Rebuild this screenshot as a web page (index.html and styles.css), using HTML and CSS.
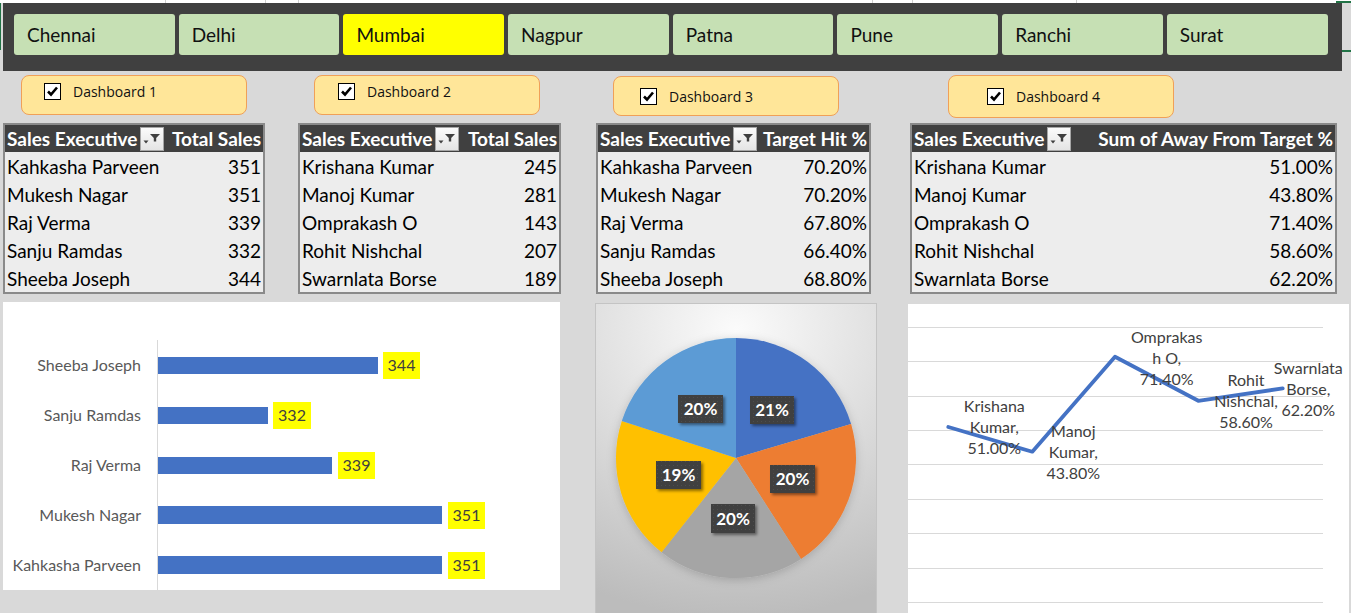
FILE: index.html
```html
<!DOCTYPE html>
<html>
<head>
<meta charset="utf-8">
<title>Sales Dashboard</title>
<link rel="stylesheet" href="styles.css">
</head>
<body>
<div class="sel-mark sel-left"></div>
<div class="sel-mark sel-top"></div>
<div class="sel-mark sel-mid"></div>
<div class="topstrip"></div>

<div class="band">
  <div class="slicer">Chennai</div>
  <div class="slicer">Delhi</div>
  <div class="slicer active">Mumbai</div>
  <div class="slicer">Nagpur</div>
  <div class="slicer">Patna</div>
  <div class="slicer">Pune</div>
  <div class="slicer">Ranchi</div>
  <div class="slicer">Surat</div>
</div>

<div class="pills">
  <div class="pill pill-1"><span class="cb"><svg width="15" height="15" viewBox="0 0 15 15"><path d="M3 7.5 L6 10.5 L12 3.5" fill="none" stroke="#000" stroke-width="2.6"/></svg></span><span class="pill-label">Dashboard 1</span></div>
  <div class="pill pill-2"><span class="cb"><svg width="15" height="15" viewBox="0 0 15 15"><path d="M3 7.5 L6 10.5 L12 3.5" fill="none" stroke="#000" stroke-width="2.6"/></svg></span><span class="pill-label">Dashboard 2</span></div>
  <div class="pill pill-3"><span class="cb"><svg width="15" height="15" viewBox="0 0 15 15"><path d="M3 7.5 L6 10.5 L12 3.5" fill="none" stroke="#000" stroke-width="2.6"/></svg></span><span class="pill-label">Dashboard 3</span></div>
  <div class="pill pill-4"><span class="cb"><svg width="15" height="15" viewBox="0 0 15 15"><path d="M3 7.5 L6 10.5 L12 3.5" fill="none" stroke="#000" stroke-width="2.6"/></svg></span><span class="pill-label">Dashboard 4</span></div>
</div>

<div class="tables">
  <div class="pivot pivot-1">
    <div class="row head"><div class="c1"><span>Sales Executive</span><span class="filter"><svg width="22" height="22" viewBox="0 0 22 22"><path d="M9 6 H19 L15.2 10 V13.5 H12.8 V10 Z" fill="#404040"/><path d="M2.5 12.5 H7.5 L5 15.5 Z" fill="#404040"/></svg></span></div><div class="c2">Total Sales</div></div>
    <div class="row"><div class="c1">Kahkasha Parveen</div><div class="c2">351</div></div>
    <div class="row"><div class="c1">Mukesh Nagar</div><div class="c2">351</div></div>
    <div class="row"><div class="c1">Raj Verma</div><div class="c2">339</div></div>
    <div class="row"><div class="c1">Sanju Ramdas</div><div class="c2">332</div></div>
    <div class="row"><div class="c1">Sheeba Joseph</div><div class="c2">344</div></div>
  </div>
  <div class="pivot pivot-2">
    <div class="row head"><div class="c1"><span>Sales Executive</span><span class="filter"><svg width="22" height="22" viewBox="0 0 22 22"><path d="M9 6 H19 L15.2 10 V13.5 H12.8 V10 Z" fill="#404040"/><path d="M2.5 12.5 H7.5 L5 15.5 Z" fill="#404040"/></svg></span></div><div class="c2">Total Sales</div></div>
    <div class="row"><div class="c1">Krishana Kumar</div><div class="c2">245</div></div>
    <div class="row"><div class="c1">Manoj Kumar</div><div class="c2">281</div></div>
    <div class="row"><div class="c1">Omprakash O</div><div class="c2">143</div></div>
    <div class="row"><div class="c1">Rohit Nishchal</div><div class="c2">207</div></div>
    <div class="row"><div class="c1">Swarnlata Borse</div><div class="c2">189</div></div>
  </div>
  <div class="pivot pivot-3">
    <div class="row head"><div class="c1"><span>Sales Executive</span><span class="filter"><svg width="22" height="22" viewBox="0 0 22 22"><path d="M9 6 H19 L15.2 10 V13.5 H12.8 V10 Z" fill="#404040"/><path d="M2.5 12.5 H7.5 L5 15.5 Z" fill="#404040"/></svg></span></div><div class="c2">Target Hit %</div></div>
    <div class="row"><div class="c1">Kahkasha Parveen</div><div class="c2">70.20%</div></div>
    <div class="row"><div class="c1">Mukesh Nagar</div><div class="c2">70.20%</div></div>
    <div class="row"><div class="c1">Raj Verma</div><div class="c2">67.80%</div></div>
    <div class="row"><div class="c1">Sanju Ramdas</div><div class="c2">66.40%</div></div>
    <div class="row"><div class="c1">Sheeba Joseph</div><div class="c2">68.80%</div></div>
  </div>
  <div class="pivot pivot-4">
    <div class="row head"><div class="c1"><span>Sales Executive</span><span class="filter"><svg width="22" height="22" viewBox="0 0 22 22"><path d="M9 6 H19 L15.2 10 V13.5 H12.8 V10 Z" fill="#404040"/><path d="M2.5 12.5 H7.5 L5 15.5 Z" fill="#404040"/></svg></span></div><div class="c2">Sum of Away From Target %</div></div>
    <div class="row"><div class="c1">Krishana Kumar</div><div class="c2">51.00%</div></div>
    <div class="row"><div class="c1">Manoj Kumar</div><div class="c2">43.80%</div></div>
    <div class="row"><div class="c1">Omprakash O</div><div class="c2">71.40%</div></div>
    <div class="row"><div class="c1">Rohit Nishchal</div><div class="c2">58.60%</div></div>
    <div class="row"><div class="c1">Swarnlata Borse</div><div class="c2">62.20%</div></div>
  </div>
</div>

<div class="charts">
  <div class="panel bar-panel">
    <svg width="557" height="288" viewBox="0 0 557 288">
      <line x1="154.5" y1="38" x2="154.5" y2="288" stroke="#d9d9d9" stroke-width="1"/>
      <g class="cat-label">
        <text x="138" y="69">Sheeba Joseph</text>
        <text x="138" y="119">Sanju Ramdas</text>
        <text x="138" y="169">Raj Verma</text>
        <text x="138" y="219">Mukesh Nagar</text>
        <text x="138" y="269">Kahkasha Parveen</text>
      </g>
      <g fill="#4472c4">
        <rect x="155" y="55" width="220" height="17"/>
        <rect x="155" y="105" width="110" height="17"/>
        <rect x="155" y="155" width="174" height="17"/>
        <rect x="155" y="204" width="284" height="18"/>
        <rect x="155" y="254" width="284" height="18"/>
      </g>
      <g fill="#ffff00">
        <rect x="380" y="50" width="37" height="27"/>
        <rect x="270" y="100" width="38" height="27"/>
        <rect x="335" y="150" width="37" height="27"/>
        <rect x="445" y="200" width="37" height="27"/>
        <rect x="445" y="250" width="37" height="27"/>
      </g>
      <g class="val-label">
        <text x="398.5" y="69">344</text>
        <text x="289" y="119">332</text>
        <text x="353.5" y="169">339</text>
        <text x="463.5" y="219">351</text>
        <text x="463.5" y="269">351</text>
      </g>
    </svg>
  </div>

  <div class="panel pie-panel">
    <svg width="280" height="320" viewBox="0 0 280 320">
      <defs>
        <pattern id="dots" width="4" height="4" patternUnits="userSpaceOnUse">
          <rect width="4" height="4" fill="#3f3f3f"/>
          <rect x="1" y="1" width="1" height="1" fill="#4d4d4d"/>
        </pattern>
        <filter id="lblshadow" x="-20%" y="-20%" width="150%" height="160%">
          <feDropShadow dx="2" dy="2" stdDeviation="1.5" flood-color="#000" flood-opacity="0.45"/>
        </filter>
        <filter id="pieshadow" x="-20%" y="-20%" width="140%" height="140%">
          <feDropShadow dx="0" dy="2" stdDeviation="5" flood-color="#000" flood-opacity="0.18"/>
        </filter>
      </defs>
      <g filter="url(#pieshadow)">
        <path d="M140 154 L140 34 A120 120 0 0 1 255.1 120.1 Z" fill="#4472c4"/>
        <path d="M140 154 L255.1 120.1 A120 120 0 0 1 205 254.9 Z" fill="#ed7d31"/>
        <path d="M140 154 L205 254.9 A120 120 0 0 1 65.6 248.2 Z" fill="#a5a5a5"/>
        <path d="M140 154 L65.6 248.2 A120 120 0 0 1 25.8 117.1 Z" fill="#ffc000"/>
        <path d="M140 154 L25.8 117.1 A120 120 0 0 1 140 34 Z" fill="#5b9bd5"/>
      </g>
      <g filter="url(#lblshadow)" fill="url(#dots)">
        <rect x="154" y="92" width="44" height="28"/>
        <rect x="82" y="91" width="45" height="28"/>
        <rect x="174" y="161" width="45" height="28"/>
        <rect x="60" y="157" width="45" height="28"/>
        <rect x="115" y="200" width="44" height="29"/>
      </g>
      <g class="pie-label">
        <text x="176" y="112">21%</text>
        <text x="104.5" y="111">20%</text>
        <text x="196.5" y="181">20%</text>
        <text x="82.5" y="177">19%</text>
        <text x="137" y="220.5">20%</text>
      </g>
    </svg>
  </div>

  <div class="panel line-panel">
    <svg width="441" height="309" viewBox="0 0 441 309">
      <g stroke="#d9d9d9" stroke-width="1">
        <line x1="0" y1="23.5" x2="415" y2="23.5"/>
        <line x1="0" y1="57.5" x2="415" y2="57.5"/>
        <line x1="0" y1="92.5" x2="415" y2="92.5"/>
        <line x1="0" y1="126.5" x2="415" y2="126.5"/>
        <line x1="0" y1="160.5" x2="415" y2="160.5"/>
        <line x1="0" y1="195.5" x2="415" y2="195.5"/>
        <line x1="0" y1="229.5" x2="415" y2="229.5"/>
        <line x1="0" y1="264.5" x2="415" y2="264.5"/>
        <line x1="0" y1="298.5" x2="415" y2="298.5"/>
      </g>
      <polyline points="40.3,123 124.3,147.7 207,52.8 290.3,96.8 374.7,84.4" fill="none" stroke="#4472c4" stroke-width="3.8" stroke-linejoin="round" stroke-linecap="round"/>
      <g class="line-label">
        <text x="86.3" y="108">Krishana</text>
        <text x="86.3" y="129">Kumar,</text>
        <text x="86.3" y="150">51.00%</text>
        <text x="165.3" y="133">Manoj</text>
        <text x="165.3" y="154">Kumar,</text>
        <text x="165.3" y="175">43.80%</text>
        <text x="258.7" y="39">Omprakas</text>
        <text x="258.7" y="59.5">h O,</text>
        <text x="258.7" y="80.5">71.40%</text>
        <text x="338" y="82">Rohit</text>
        <text x="338" y="103">Nishchal,</text>
        <text x="338" y="124">58.60%</text>
        <text x="400.3" y="70">Swarnlata</text>
        <text x="400.3" y="91">Borse,</text>
        <text x="400.3" y="112">62.20%</text>
      </g>
    </svg>
  </div>
</div>
</body>
</html>
```
FILE: styles.css
```css
* { box-sizing: border-box; }
html, body { margin: 0; padding: 0; }
body {
  width: 1351px;
  height: 613px;
  overflow: hidden;
  position: relative;
  background: #d9d9d9;
  font-family: Lato, "Open Sans", sans-serif;
  color: #000;
}

/* Excel sheet remnants */
.topstrip {
  height: 3px;
  background:
    linear-gradient(#cfcfcf, #cfcfcf) 165px 0 / 1px 3px no-repeat,
    linear-gradient(#cfcfcf, #cfcfcf) 265px 0 / 1px 3px no-repeat,
    linear-gradient(#cfcfcf, #cfcfcf) 298px 0 / 1px 3px no-repeat,
    linear-gradient(#cfcfcf, #cfcfcf) 872px 0 / 1px 3px no-repeat,
    linear-gradient(#cfcfcf, #cfcfcf) 912px 0 / 1px 3px no-repeat,
    linear-gradient(#cfcfcf, #cfcfcf) 1076px 0 / 1px 3px no-repeat,
    #ffffff;
}
.sel-mark { position: absolute; background: #217346; }
.sel-left { left: 0; top: 3px; width: 1px; height: 47px; }
.sel-top { left: 1336px; top: 1px; width: 15px; height: 2px; }
.sel-mid { left: 1342px; top: 50px; width: 9px; height: 2px; }

/* Slicer band */
.band {
  margin-left: 3px;
  width: 1339px;
  height: 68px;
  background: #404040;
  padding: 11px 0 0 11px;
  display: flex;
  gap: 4px;
  align-items: flex-start;
}
.slicer {
  width: 160.7px;
  flex: none;
  height: 41px;
  background: #c6e0b4;
  border-radius: 3px;
  padding-left: 13px;
  font-size: 19px;
  line-height: 41px;
  color: #111;
}
.slicer.active { background: #ffff00; }

/* Dashboard toggles */
.pills {
  display: flex;
  align-items: flex-start;
  height: 52px;
  padding-top: 4px;
}
.pill {
  width: 226px;
  height: 40px;
  background: #ffe699;
  border: 1px solid #f0a058;
  border-radius: 8px;
  display: flex;
  align-items: center;
  align-self: flex-start;
  padding-bottom: 7px;
  font-family: "Open Sans", sans-serif;
  font-size: 14px;
  color: #111;
}
.pill-1 { margin-left: 21px; padding-left: 22px; }
.pill-2 { margin-left: 67px; padding-left: 23px; }
.pill-3 { margin-left: 73px; margin-top: 1px; padding-left: 26px; padding-bottom: 0; padding-top: 0; }
.pill-4 { margin-left: 109px; height: 43px; padding-left: 38px; padding-bottom: 0; }
.cb {
  width: 17px;
  height: 17px;
  background: #fff;
  border: 1px solid #000;
  display: flex;
  align-items: center;
  justify-content: center;
  margin-right: 12px;
}
.pill-label { line-height: 17px; }

/* Pivot tables */
.tables {
  display: flex;
  align-items: flex-start;
}
.pivot {
  border: 2px solid #8a8a8a;
  background: #ededed;
}
.pivot-1 { margin-left: 3px; width: 262px; }
.pivot-2 { margin-left: 33px; width: 263px; }
.pivot-3 { margin-left: 35px; width: 275px; }
.pivot-4 { margin-left: 39px; width: 427px; }
.row {
  display: grid;
  grid-template-columns: 159px 1fr;
  height: 28px;
  align-items: center;
  font-size: 19px;
  white-space: nowrap;
}
.row.head {
  height: 27px;
  background: #404040;
  color: #fff;
  font-weight: 700;
  font-size: 19px;
}
.c1 { padding-left: 2px; }
.c2 { text-align: right; padding-right: 2px; }
.head .c1 {
  display: flex;
  align-items: center;
  height: 27px;
}
.filter {
  margin-left: auto;
  flex: none;
  width: 24px;
  height: 24px;
  border: 1px solid #a6a6a6;
  background: linear-gradient(#fbfbfb, #e4e4e4);
  display: flex;
  align-items: center;
  justify-content: center;
}

/* Charts */
.charts {
  display: flex;
  align-items: flex-start;
  margin-top: 8px;
}
.panel svg { display: block; }
.bar-panel {
  margin-left: 3px;
  width: 557px;
  height: 288px;
  background: #fff;
}
.pie-panel {
  margin-left: 35px;
  margin-top: 1px;
  width: 282px;
  height: 322px;
  border: 1px solid #c4c4c4;
  background: radial-gradient(ellipse 120% 90% at 50% 8%, #fbfbfb 0%, #e2e2e2 40%, #cfcfcf 70%, #bcbcbc 100%);
}
.line-panel {
  margin-left: 31px;
  margin-top: 2px;
  width: 441px;
  height: 320px;
  background: #fff;
}
.cat-label text {
  font-family: Lato, sans-serif;
  font-size: 16px;
  fill: #595959;
  text-anchor: end;
}
.val-label text {
  font-family: Lato, sans-serif;
  font-size: 16px;
  fill: #404040;
  text-anchor: middle;
}
.pie-label text {
  font-family: Lato, sans-serif;
  font-size: 17px;
  font-weight: 700;
  fill: #fff;
  text-anchor: middle;
}
.line-label text {
  font-family: Lato, sans-serif;
  font-size: 16px;
  fill: #404040;
  text-anchor: middle;
}
```
